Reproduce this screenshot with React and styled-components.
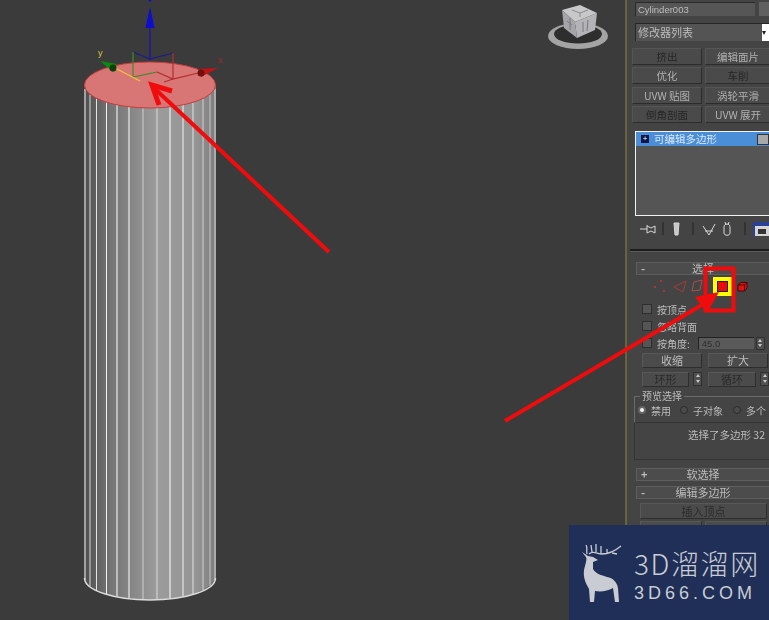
import React from "react";
import styled, { createGlobalStyle } from "styled-components";

const Global = createGlobalStyle`
    html, body {
        margin: 0;
        padding: 0;
        background: #3b3b3b;
    }
`;

const edges = [
    { x: 85, c: "#f4f4f4" }, { x: 90, c: "#d8d8d8" }, { x: 96.5, c: "#e4e4e4" }, { x: 106.5, c: "#f0f0f0" },
    { x: 117, c: "#ffffff" }, { x: 129, c: "#ffffff" }, { x: 143, c: "#cfcfcf" }, { x: 157, c: "#dcdcdc" },
    { x: 170, c: "#ffffff" }, { x: 183, c: "#f4f4f4" }, { x: 193, c: "#e2e2e2" }, { x: 203, c: "#d0d0d0" },
    { x: 210, c: "#c8c8c8" }, { x: 215, c: "#d8d8d8" },
];

const topRows = [
    { label: "挤出", dark: true }, { label: "编辑面片" },
    { label: "优化" }, { label: "车削", dark: true },
    { label: "UVW 贴图" }, { label: "涡轮平滑" },
    { label: "倒角剖面", dark: true }, { label: "UVW 展开" },
];

const Scene = () => (
    <SceneSvg viewBox="0 0 625 620">
        <defs>
            <linearGradient id="body" x1="0" x2="1" y1="0" y2="0">
                <stop offset="0" stopColor="#4e4e4e" />
                <stop offset="0.2" stopColor="#747474" />
                <stop offset="0.55" stopColor="#9c9c9c" />
                <stop offset="0.85" stopColor="#959595" />
                <stop offset="1" stopColor="#7c7c7c" />
            </linearGradient>
            <filter id="soft">
                <feGaussianBlur stdDeviation="0.5" />
            </filter>
        </defs>
        {/* cylinder */}
        <path d="M84 85 V575 A66 25 0 0 0 216 575 V85 Z" fill="url(#body)" />
        {edges.map((e) => {
            const t = (e.x - 150) / 66;
            const dy = Math.sqrt(Math.max(0, 1 - t * t));
            return (
                <line key={e.x} x1={e.x} x2={e.x} y1={85 + 23 * dy} y2={576 + 24 * dy} stroke={e.c} strokeWidth="1" />
            );
        })}
        <path d="M84.5 578 A65.5 22 0 0 0 215.5 578" fill="none" stroke="#dcdcdc" strokeWidth="1.5" />
        <ellipse cx="150" cy="85" rx="65.5" ry="23" fill="#d87676" stroke="#c83c3c" strokeWidth="1" />

        {/* gizmo */}
        <line x1="150" y1="26" x2="150" y2="60" stroke="#1c1c9c" strokeWidth="1.6" />
        <path d="M150 7 L154.5 28 H145.5 Z" fill="#0d0dd0" />
        <circle cx="150" cy="0" r="1.5" fill="#0d0dd0" />
        <polyline points="133,52 150,59 173,53" fill="none" stroke="#1c1c8c" strokeWidth="1.2" />
        <polyline points="133,52 133,77 157,72" fill="none" stroke="#3f8a2c" strokeWidth="1.2" />
        <polyline points="173,53 173,79" fill="none" stroke="#b03030" strokeWidth="1.2" />
        <polyline points="157,72 173,79 198,73" fill="none" stroke="#b52c2c" strokeWidth="1.2" />
        <line x1="164" y1="82" x2="173" y2="79" stroke="#b52c2c" strokeWidth="1.2" />
        <line x1="115" y1="68" x2="140" y2="81" stroke="#ecc23c" strokeWidth="1.4" />
        <path d="M100 61 L117 64 L113 72 Z" fill="#0d8a0d" />
        <circle cx="113" cy="68" r="3.5" fill="#0f3f0f" />
        <path d="M218 68 L198 69 L201 77 Z" fill="#c01414" />
        <circle cx="201" cy="73" r="3.5" fill="#701010" />
        <SceneLabel x="98" y="56" fill="#d8c83c">y</SceneLabel>
        <SceneLabel x="218" y="63" fill="#a02a2a">x</SceneLabel>

        {/* view cube */}
        <g filter="url(#soft)">
            <ellipse cx="578" cy="36" rx="30" ry="13" fill="#a4a4a4" />
            <ellipse cx="578" cy="34" rx="24" ry="9.5" fill="#2e2e2e" />
            <path d="M580 5 L597 13 L575 22 L562 10 Z" fill="#c8c8cb" />
            <path d="M562 10 L575 22 L577 38 L564 28 Z" fill="#a4a4a9" />
            <path d="M575 22 L597 13 L595 30 L577 38 Z" fill="#b4b4b8" />
            <path d="M572 10 L580 13 L588 10 M580 13 V17" fill="none" stroke="#8c8c90" strokeWidth="1" />
            <path d="M567 21 L572 25 M570 18 V30 M583 22 V32 M588 20 L587 31" fill="none" stroke="#77777c" strokeWidth="1" />
        </g>
    </SceneSvg>
);

const Annotations = () => (
    <AnnotationSvg viewBox="0 0 769 620">
        <g stroke="#f00c0c" fill="none" strokeWidth="4">
            <line x1="329" y1="252" x2="154" y2="88" />
            <polyline points="159,105 152,85 172,91" strokeWidth="5" />
            <line x1="505" y1="421" x2="712" y2="299" />
            <rect x="705.5" y="268.5" width="28" height="42" />
        </g>
        <path d="M719 292 L695 297 L707 313 Z" fill="#f00c0c" />
    </AnnotationSvg>
);

const Deer = () => (
    <svg width="46" height="62" viewBox="0 0 46 62">
        <path
            d="M6 12 C5 8 7 6 5 3 M8 12 C12 8 16 12 21 12 C28 12 34 9 40 4 M11 10 L10 3 M15 10 L15 2 M20 12 L20 4 M26 12 L26 7 M31 11 L36 12"
            fill="none"
            stroke="#c9ccd2"
            strokeWidth="1.3"
        />
        <path
            d="M1 10 L7 14 L12 15 L17 18 L12 20 L12 27 C15 32 20 33 26 35 C32 36 36 40 37 46 L38 60 L34 60 L32 46 C27 49 20 50 14 49 L13 60 L9 60 L8 47 C4 40 1 33 4 24 C5 20 6 17 5 15 Z"
            fill="#c9ccd2"
        />
    </svg>
);

const SelectIcons = () => (
    <svg width="60" height="18" viewBox="0 0 60 18">
        <g fill="#b03434">
            <rect x="4" y="9" width="2" height="2" />
            <rect x="10" y="3" width="2" height="2" />
            <rect x="13" y="13" width="2" height="2" />
        </g>
        <path d="M24 10 L36 4 L33 15 Z" fill="none" stroke="#a83a3a" strokeWidth="1" />
        <path d="M44 5 L52 3 L50 13 L42 14 Z" fill="none" stroke="#a85050" strokeWidth="1" />
    </svg>
);

const App = () => {
    return (
        <Window>
            <Global />
            <Viewport>
                <Scene />
            </Viewport>
            <Panel>
                <NameRow>
                    <NameInput>Cylinder003</NameInput>
                    <Swatch />
                </NameRow>
                <ModifierSelect>
                    <span>修改器列表</span>
                    <SelectArrow>▾</SelectArrow>
                </ModifierSelect>
                <ButtonGrid>
                    {topRows.map((b) => (
                        <SetButton key={b.label} $dark={b.dark}>{b.label}</SetButton>
                    ))}
                </ButtonGrid>
                <StackList>
                    <StackItem>
                        <Plus>+</Plus>
                        <span>可编辑多边形</span>
                        <Bulb />
                    </StackItem>
                </StackList>
                <Toolbar>
                    <svg width="142" height="16" viewBox="0 0 142 16">
                        <g fill="none" stroke="#d8d8d8" strokeWidth="1">
                            <path d="M13 8 H20 M20 4 V12 M20 5 L24 7 L28 5 V12 L24 10 L20 12" />
                            <path d="M47 2 H52 L51 14 H48 Z" fill="#c8c8c8" />
                            <path d="M76 5 L82 14 L88 3 M78 10 H86" />
                            <path d="M97 6 C97 2 103 2 103 6 V12 C103 15 97 15 97 12 Z M99 4 L98 1 M101 4 L102 1" />
                        </g>
                        <g stroke="#222" strokeWidth="1">
                            <line x1="36" x2="36" y1="1" y2="14" />
                            <line x1="66" x2="66" y1="1" y2="14" />
                            <line x1="118" x2="118" y1="1" y2="14" />
                        </g>
                        <rect x="126" y="1" width="16" height="14" fill="#2a3f96" />
                        <rect x="128" y="5" width="14" height="10" fill="#d4d4d4" />
                        <rect x="131" y="8" width="8" height="5" fill="#333" />
                    </svg>
                </Toolbar>
                <Divider />
                <Rollout>
                    <RolloutSign>-</RolloutSign>
                    选择
                </Rollout>
                <IconRow>
                    <SelectIcons />
                    <ActiveIcon>
                        <ActiveSquare />
                    </ActiveIcon>
                    <svg width="11" height="11" viewBox="0 0 11 11">
                        <path d="M1 4 L4 1.5 H10 V7 L7.5 10 H1 Z" fill="#e01010" stroke="#300" strokeWidth="0.8" />
                        <path d="M1 4 H7.5 V10 M7.5 4 L10 1.5" fill="none" stroke="#300" strokeWidth="0.8" />
                    </svg>
                </IconRow>
                <CheckRow $first>
                    <CheckBox />
                    <span>按顶点</span>
                </CheckRow>
                <CheckRow>
                    <CheckBox />
                    <span>忽略背面</span>
                </CheckRow>
                <CheckRow>
                    <CheckBox />
                    <span>按角度:</span>
                    <AngleInput>45.0</AngleInput>
                    <Spinner />
                </CheckRow>
                <WideRow>
                    <ActionButton>收缩</ActionButton>
                    <ActionButton>扩大</ActionButton>
                </WideRow>
                <SpinRow>
                    <ActionButton $dark>环形</ActionButton>
                    <Spinner />
                    <ActionButton $dark>循环</ActionButton>
                    <Spinner />
                </SpinRow>
                <GroupBox>
                    <GroupTitle>预览选择</GroupTitle>
                    <RadioRow>
                        <RadioLabel><Radio $on />禁用</RadioLabel>
                        <RadioLabel><Radio />子对象</RadioLabel>
                        <RadioLabel><Radio />多个</RadioLabel>
                    </RadioRow>
                </GroupBox>
                <StatusBox>选择了多边形 32</StatusBox>
                <Rollout $gap={8}>
                    <RolloutSign>+</RolloutSign>
                    软选择
                </Rollout>
                <Rollout $gap={5}>
                    <RolloutSign>-</RolloutSign>
                    编辑多边形
                </Rollout>
                <InsertButton $dark>插入顶点</InsertButton>
                <LowerRow>
                    <ActionButton />
                    <ActionButton />
                </LowerRow>
            </Panel>
            <Annotations />
            <Watermark>
                <Deer />
                <Brand>
                    <BrandName>3D溜溜网</BrandName>
                    <BrandUrl>3D66.COM</BrandUrl>
                </Brand>
            </Watermark>
        </Window>
    );
};

const cjk = `"Noto Sans CJK SC", "Liberation Sans", sans-serif`;

const Window = styled.div`
    position: relative;
    display: flex;
    width: 769px;
    height: 620px;
    overflow: hidden;
    background: #3b3b3b;
    font-family: ${cjk};
    font-size: 11px;
    color: #bcbcbc;
`;

const Viewport = styled.div`
    flex: 0 0 625px;
    height: 620px;
`;

const SceneSvg = styled.svg`
    display: block;
    width: 625px;
    height: 620px;
`;

const SceneLabel = styled.text`
    font-family: "Liberation Sans", sans-serif;
    font-size: 9px;
`;

const AnnotationSvg = styled.svg`
    position: absolute;
    left: 0;
    top: 0;
    width: 769px;
    height: 620px;
    pointer-events: none;
`;

const Panel = styled.div`
    flex: 0 0 142px;
    height: 620px;
    overflow: hidden;
    background: #444444;
    border-left: 2px solid #6a6238;
    white-space: nowrap;
    filter: blur(0.4px);
`;

const NameRow = styled.div`
    display: flex;
    gap: 4px;
    margin: 2px 0 0 8px;
    height: 14px;
`;

const NameInput = styled.div`
    width: 123px;
    padding-left: 2px;
    box-sizing: border-box;
    background: #565656;
    border-top: 1px solid #2a2a2a;
    border-left: 1px solid #2a2a2a;
    font-family: "Liberation Sans", sans-serif;
    font-size: 9.5px;
    line-height: 13px;
    color: #bdbdbd;
`;

const Swatch = styled.div`
    width: 10px;
    background: #606060;
`;

const ModifierSelect = styled.div`
    display: flex;
    justify-content: space-between;
    margin: 7px 0 0 8px;
    height: 18px;
    background: #545454;
    border-top: 1px solid #262626;
    border-left: 1px solid #262626;
    box-sizing: border-box;
    padding-left: 2px;
    line-height: 16px;
`;

const SelectArrow = styled.span`
    width: 7px;
    background: #ffffff;
    color: #222;
    font-size: 8px;
`;

const ButtonGrid = styled.div`
    display: grid;
    grid-template-columns: 70px 66px;
    grid-auto-rows: 17px;
    gap: 2.3px 3px;
    margin: 7px 0 0 5px;
`;

const SetButton = styled.div`
    background: #4a4a4a;
    border-right: 1px solid #2c2c2c;
    border-bottom: 1px solid #2c2c2c;
    border-top: 1px solid #555;
    border-left: 1px solid #555;
    box-sizing: border-box;
    text-align: center;
    line-height: 15px;
    font-size: 10.5px;
    color: ${(p) => (p.$dark ? "#262626" : "#b0b0b0")};
`;

const StackList = styled.div`
    margin: 8px 0 0 8px;
    height: 85px;
    box-sizing: border-box;
    background: #555555;
    border: 1px solid #f2f2f2;
    border-right: none;
`;

const StackItem = styled.div`
    display: flex;
    align-items: center;
    gap: 5px;
    height: 14px;
    padding-left: 5px;
    background: #4a8ed8;
    color: #dce8f4;
    font-size: 10.5px;
    position: relative;
`;

const Plus = styled.span`
    width: 8px;
    height: 8px;
    background: #10184a;
    color: #fff;
    font-size: 8px;
    line-height: 8px;
    text-align: center;
    font-family: "Liberation Sans", sans-serif;
`;

const Bulb = styled.span`
    position: absolute;
    right: 0;
    top: 2px;
    width: 10px;
    height: 9px;
    background: #a8a8a8;
    border: 1px solid #333;
`;

const Toolbar = styled.div`
    margin-top: 5px;
    height: 16px;
    svg {
        display: block;
    }
`;

const Divider = styled.div`
    margin: 12px 0 0 3px;
    height: 2px;
    background: #1e1e1e;
    border-bottom: 1px solid #5a5a5a;
`;

const Rollout = styled.div`
    position: relative;
    margin: ${(p) => p.$gap ?? 10}px 0 0 9px;
    height: 13px;
    background: #4c4c4c;
    border: 1px solid #5e5e5e;
    border-right: none;
    box-sizing: border-box;
    text-align: center;
    line-height: 11px;
    font-size: 11px;
`;

const RolloutSign = styled.span`
    position: absolute;
    left: 4px;
    top: 0;
    font-weight: bold;
`;

const IconRow = styled.div`
    display: flex;
    align-items: center;
    margin: 2px 0 0 23px;
    height: 19px;
    svg:last-child {
        margin-left: 5px;
    }
`;

const ActiveIcon = styled.div`
    display: flex;
    align-items: center;
    justify-content: center;
    width: 19px;
    height: 19px;
    margin-left: 3px;
    background: #ffff00;
`;

const ActiveSquare = styled.div`
    width: 9px;
    height: 9px;
    background: #e80c0c;
    border: 1px solid #222;
`;

const CheckRow = styled.div`
    display: flex;
    align-items: center;
    gap: 5px;
    margin: ${(p) => (p.$first ? 7 : 4)}px 0 0 15px;
    height: 13px;
    line-height: 13px;
    font-size: 10px;
`;

const CheckBox = styled.span`
    flex: none;
    width: 10px;
    height: 10px;
    box-sizing: border-box;
    background: #555;
    border: 1px solid #2e2e2e;
`;

const AngleInput = styled.span`
    flex: none;
    width: 56px;
    height: 12px;
    box-sizing: border-box;
    margin-left: 3px;
    padding-left: 3px;
    background: #5a5a5a;
    border-top: 1px solid #222;
    border-left: 1px solid #222;
    font-family: "Liberation Sans", sans-serif;
    font-size: 9.5px;
    line-height: 11px;
    color: #2e2e2e;
`;

const Spinner = styled.span`
    position: relative;
    flex: none;
    width: 9px;
    height: 13px;
    box-sizing: border-box;
    background: #505050;
    border: 1px solid #303030;
    margin-left: -3px;
    &::before,
    &::after {
        content: "";
        position: absolute;
        left: 1.5px;
        border-left: 2.5px solid transparent;
        border-right: 2.5px solid transparent;
    }
    &::before {
        top: 1.5px;
        border-bottom: 3px solid #c8c8c8;
    }
    &::after {
        bottom: 1.5px;
        border-top: 3px solid #c8c8c8;
    }
`;

const WideRow = styled.div`
    display: grid;
    grid-template-columns: 60px 60px;
    gap: 6px;
    margin: 3px 0 0 15px;
    height: 15px;
`;

const SpinRow = styled.div`
    display: grid;
    grid-template-columns: 47px 9px 50px 8px;
    gap: 4px;
    margin: 4px 0 0 15px;
    height: 14px;
    > span {
        margin-left: 0;
        height: 14px;
    }
    > div:nth-child(3) {
        margin-left: 2px;
    }
`;

const ActionButton = styled.div`
    background: #4b4b4b;
    border: 1px solid #2e2e2e;
    border-top-color: #585858;
    border-left-color: #585858;
    box-sizing: border-box;
    text-align: center;
    line-height: 13px;
    font-size: 11px;
    color: ${(p) => (p.$dark ? "#2a2a2a" : "#bcbcbc")};
`;

const GroupBox = styled.div`
    position: relative;
    margin: 10px 0 0 7px;
    height: 27px;
    box-sizing: border-box;
    border: 1px solid #6a6a6a;
    border-right: none;
    border-bottom-color: #333;
`;

const GroupTitle = styled.span`
    position: absolute;
    left: 5px;
    top: -7px;
    padding: 0 2px;
    background: #444;
    line-height: 12px;
    font-size: 10px;
`;

const RadioRow = styled.div`
    display: grid;
    grid-template-columns: 42px 53px 40px;
    margin: 7px 0 0 3px;
`;

const RadioLabel = styled.label`
    display: flex;
    align-items: center;
    gap: 5px;
    line-height: 13px;
    font-size: 10px;
`;

const Radio = styled.span`
    flex: none;
    width: 8px;
    height: 8px;
    border-radius: 50%;
    box-sizing: border-box;
    background: ${(p) => (p.$on ? "#f2f2f2" : "#4a4a4a")};
    border: ${(p) => (p.$on ? "2px solid #666" : "1px solid #2c2c2c")};
`;

const StatusBox = styled.div`
    margin: 0 0 0 7px;
    height: 37px;
    box-sizing: border-box;
    padding: 4px 4px 0 0;
    text-align: right;
    font-size: 10.5px;
    border-left: 1px solid #333;
    border-bottom: 1px solid #333;
    line-height: 15px;
`;

const InsertButton = styled(ActionButton)`
    margin: 4px 0 0 13px;
    width: 127px;
    height: 16px;
    line-height: 14px;
`;

const LowerRow = styled.div`
    display: grid;
    grid-template-columns: 62px 62px;
    gap: 3px;
    margin: 2px 0 0 13px;
    height: 16px;
`;

const Watermark = styled.div`
    position: absolute;
    right: 0;
    bottom: 0;
    display: flex;
    align-items: center;
    gap: 7px;
    width: 200px;
    height: 95px;
    box-sizing: border-box;
    padding-left: 12px;
    background: #1f2f58;
    color: #c9ccd2;
`;

const Brand = styled.div`
    display: flex;
    flex-direction: column;
`;

const BrandName = styled.div`
    font-size: 28px;
    line-height: 40px;
    font-weight: 300;
    letter-spacing: 1.6px;
`;

const BrandUrl = styled.div`
    font-family: "Liberation Sans", sans-serif;
    font-size: 18px;
    line-height: 20px;
    letter-spacing: 4px;
`;

export default App;
